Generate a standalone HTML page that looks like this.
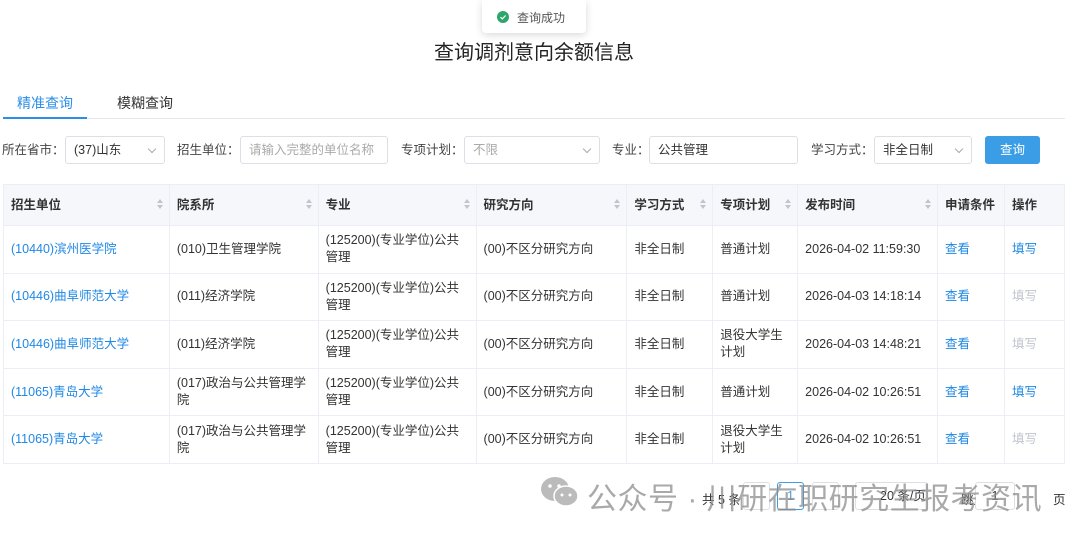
<!DOCTYPE html>
<html><head><meta charset="utf-8"><style>
*{margin:0;padding:0;box-sizing:border-box}
body{width:1080px;height:535px;overflow:hidden;background:#fff;font-family:"Liberation Sans","Noto Sans CJK SC",sans-serif;color:#333;font-size:12.5px;position:relative}
.a{position:absolute}
.toast{left:482px;top:0;width:104px;height:33px;border-radius:0 0 4px 4px;box-shadow:0 2px 8px rgba(0,0,0,.15);background:#fff}
.inp{position:absolute;height:28px;top:136px;border:1px solid #dcdfe6;border-radius:3px;line-height:26px;padding-left:8px;font-size:12.5px}
.lbl{position:absolute;top:136px;line-height:28px;font-size:12.5px;color:#444}
.arr{position:absolute;right:9px;top:9px;width:6px;height:6px;border-right:1px solid #aaa;border-bottom:1px solid #aaa;transform:rotate(45deg)}
table{position:absolute;left:3px;top:184px;border-collapse:collapse;width:1062px}
td,th{border:1px solid #ebeef5;padding:0 7px;text-align:left;vertical-align:middle;line-height:17px}
th{height:41px;background:#f5f7fa;font-weight:bold;color:#333;position:relative}
td{height:47.6px;color:#333}
.s{position:absolute;right:9px;top:14px;width:0;height:0}
.s:before{content:"";position:absolute;left:-3px;top:0;border:3px solid transparent;border-bottom:4px solid #c0c4cc;border-top:0}
.s:after{content:"";position:absolute;left:-3px;top:6px;border:3px solid transparent;border-top:4px solid #c0c4cc;border-bottom:0}
.l{color:#1e88e5}.g{color:#c0c4cc}
.pb{position:absolute;top:482px;height:28px;border:1px solid #dcdfe6;border-radius:3px;background:#fff;white-space:nowrap}
</style></head><body>
<div class="a toast"><svg class="a" style="left:15px;top:11px" width="12" height="12"><circle cx="6" cy="6" r="6" fill="#2ea66b"/><path d="M3.5 6.2l1.8 1.7 3.3-3.4" stroke="#fff" stroke-width="1.2" fill="none"/></svg><span class="a" style="left:35px;top:9px;font-size:12px;color:#555">查询成功</span></div>
<div class="a" style="left:0;width:1068px;top:36px;text-align:center;font-size:20px;color:#222">查询调剂意向余额信息</div>
<div class="a" style="left:17px;top:93px;font-size:14px;color:#2b8fe8">精准查询</div>
<div class="a" style="left:117px;top:93px;font-size:14px;color:#333">模糊查询</div>
<div class="a" style="left:3px;top:118px;width:1062px;height:1px;background:#e4e7ed"></div>
<div class="a" style="left:3px;top:117px;width:84px;height:2px;background:#2b8fe8"></div>
<div class="lbl" style="left:2px">所在省市：</div>
<div class="inp" style="left:65px;width:100px">(37)山东<i class="arr"></i></div>
<div class="lbl" style="left:177px">招生单位：</div>
<div class="inp" style="left:240px;width:148px;color:#aaa">请输入完整的单位名称</div>
<div class="lbl" style="left:401px">专项计划：</div>
<div class="inp" style="left:464px;width:136px;color:#aaa">不限<i class="arr"></i></div>
<div class="lbl" style="left:612px">专业：</div>
<div class="inp" style="left:649px;width:149px">公共管理</div>
<div class="lbl" style="left:811px">学习方式：</div>
<div class="inp" style="left:874px;width:98px">非全日制<i class="arr"></i></div>
<div class="a" style="left:985px;top:136px;width:55px;height:28px;border-radius:3px;background:#3b9de6;color:#fff;text-align:center;line-height:28px;font-size:12.5px">查询</div>
<table>
<colgroup><col style="width:166px"><col style="width:149px"><col style="width:158px"><col style="width:151px"><col style="width:86px"><col style="width:85px"><col style="width:140px"><col style="width:67px"><col style="width:60px"></colgroup>
<tr><th>招生单位<i class="s"></i></th><th>院系所<i class="s"></i></th><th>专业<i class="s"></i></th><th>研究方向<i class="s"></i></th><th>学习方式<i class="s"></i></th><th>专项计划<i class="s"></i></th><th>发布时间<i class="s"></i></th><th>申请条件</th><th>操作</th></tr>
<tr><td class="l">(10440)滨州医学院</td><td>(010)卫生管理学院</td><td>(125200)(专业学位)公共管理</td><td>(00)不区分研究方向</td><td>非全日制</td><td>普通计划</td><td>2026-04-02 11:59:30</td><td class="l">查看</td><td class="l">填写</td></tr>
<tr><td class="l">(10446)曲阜师范大学</td><td>(011)经济学院</td><td>(125200)(专业学位)公共管理</td><td>(00)不区分研究方向</td><td>非全日制</td><td>普通计划</td><td>2026-04-03 14:18:14</td><td class="l">查看</td><td class="g">填写</td></tr>
<tr><td class="l">(10446)曲阜师范大学</td><td>(011)经济学院</td><td>(125200)(专业学位)公共管理</td><td>(00)不区分研究方向</td><td>非全日制</td><td>退役大学生计划</td><td>2026-04-03 14:48:21</td><td class="l">查看</td><td class="g">填写</td></tr>
<tr><td class="l">(11065)青岛大学</td><td>(017)政治与公共管理学院</td><td>(125200)(专业学位)公共管理</td><td>(00)不区分研究方向</td><td>非全日制</td><td>普通计划</td><td>2026-04-02 10:26:51</td><td class="l">查看</td><td class="l">填写</td></tr>
<tr><td class="l">(11065)青岛大学</td><td>(017)政治与公共管理学院</td><td>(125200)(专业学位)公共管理</td><td>(00)不区分研究方向</td><td>非全日制</td><td>退役大学生计划</td><td>2026-04-02 10:26:51</td><td class="l">查看</td><td class="g">填写</td></tr>
</table>
<div class="a" style="left:702px;top:489px;font-size:12.5px">共 5 条</div>
<div class="pb" style="left:743px;width:27px"></div>
<div class="pb" style="left:777px;width:27px;border-color:#3b9de6;color:#3b9de6;text-align:center;line-height:26px">1</div>
<div class="pb" style="left:812px;width:27px"></div>
<div class="pb" style="left:855px;width:73px;line-height:26px;padding-left:24px">20 条/页</div>
<div class="a" style="left:961px;top:489px">跳至</div>
<div class="pb" style="left:975px;width:40px;text-align:center;line-height:26px">1</div>
<div class="a" style="left:1053px;top:489px">页</div>
<svg class="a" style="left:540px;top:475px" width="40" height="34"><ellipse cx="15" cy="14" rx="14" ry="12" fill="#bbb"/><ellipse cx="26" cy="21" rx="12" ry="10" fill="#bbb" stroke="#fff" stroke-width="1.5"/><circle cx="10" cy="11" r="1.8" fill="#fff"/><circle cx="19" cy="11" r="1.8" fill="#fff"/><circle cx="22" cy="20" r="1.5" fill="#fff"/><circle cx="30" cy="20" r="1.5" fill="#fff"/></svg>
<div class="a" style="left:587px;top:474px;font-size:30px;color:rgba(140,140,140,.75);white-space:nowrap;letter-spacing:0.5px">公众号 · 川研在职研究生报考资讯</div>
</body></html>
